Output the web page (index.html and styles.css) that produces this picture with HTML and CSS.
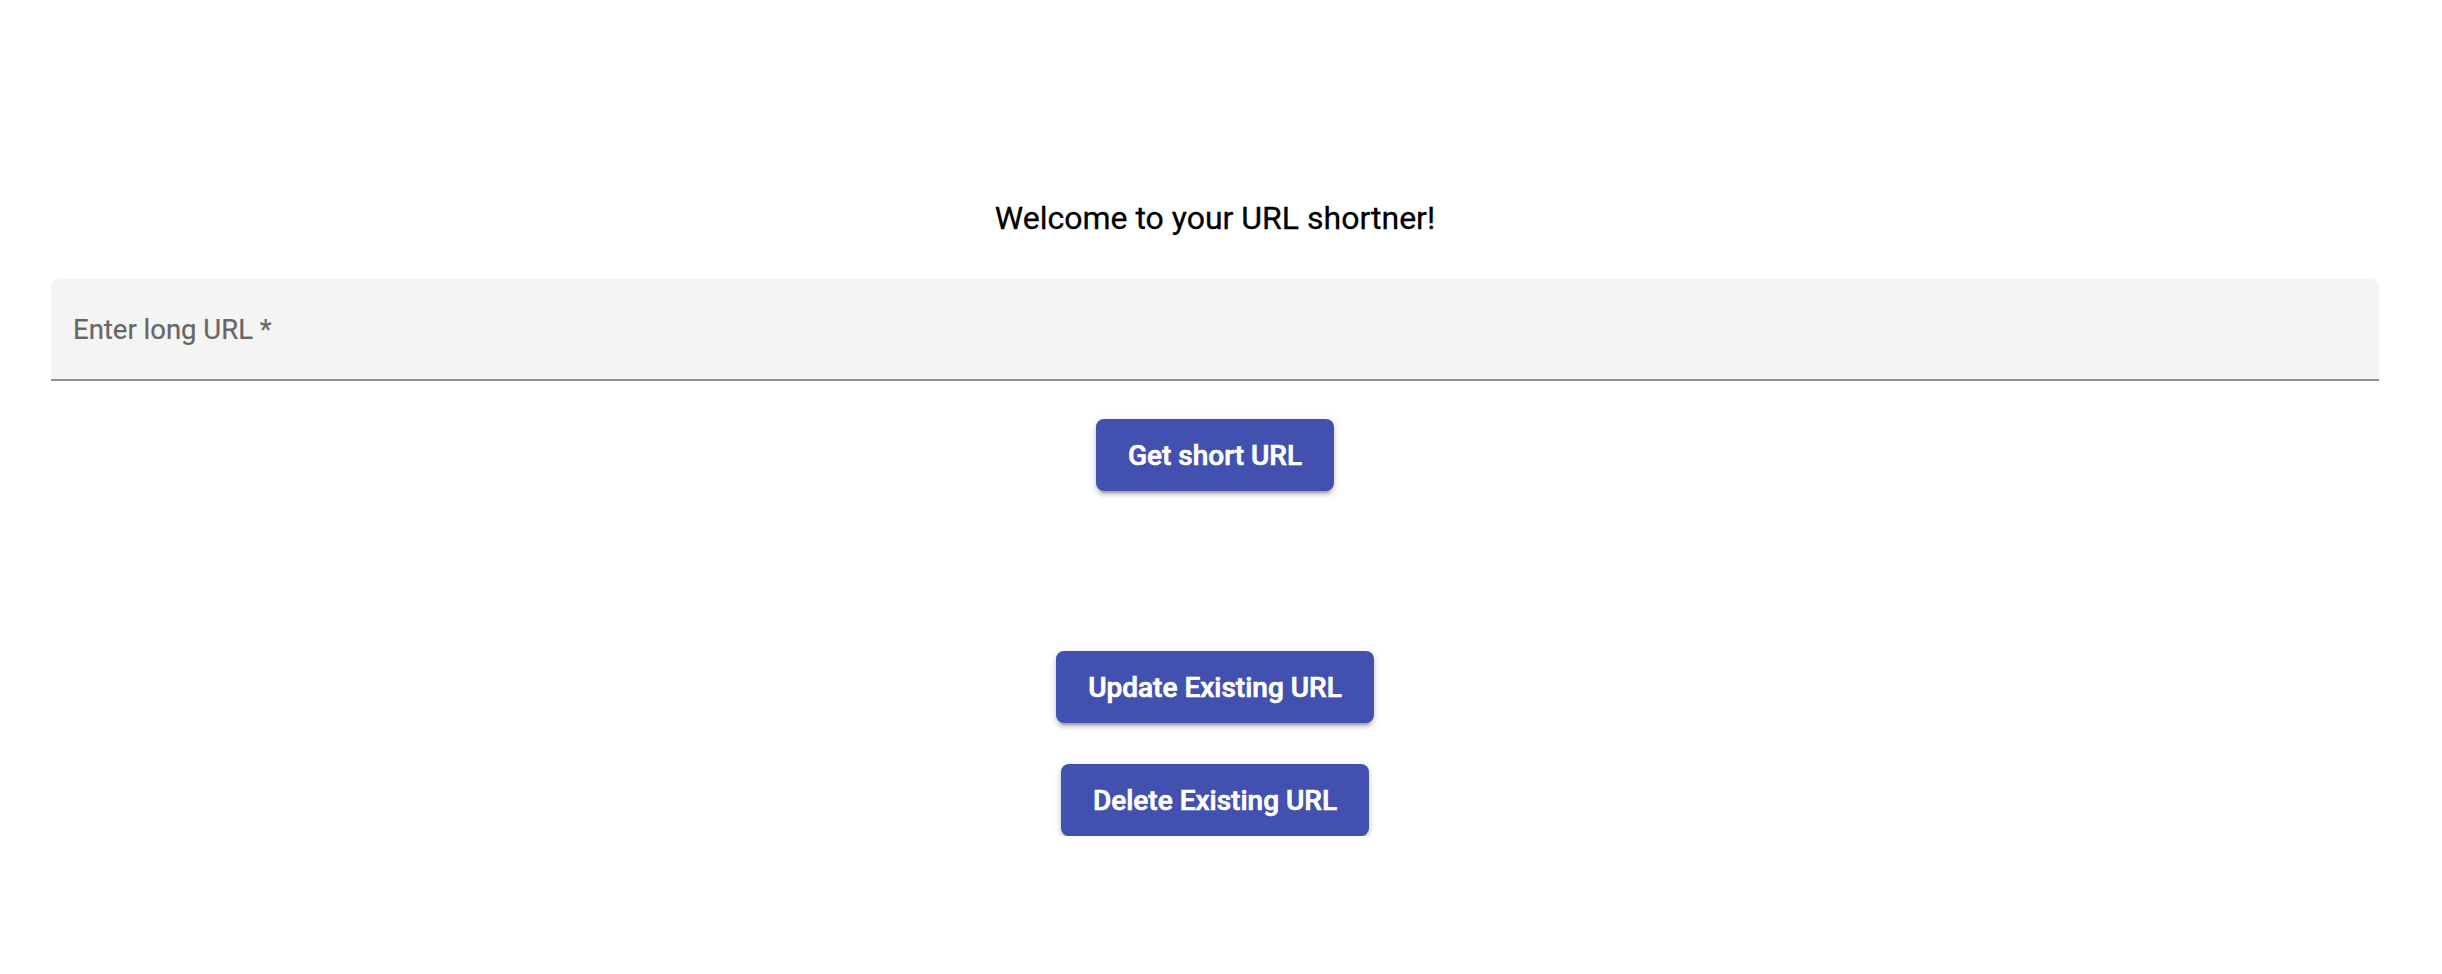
FILE: index.html
```html
<!DOCTYPE html>
<html lang="en">
<head>
<meta charset="utf-8">
<title>URL shortner</title>
<link rel="stylesheet" href="styles.css">
</head>
<body>
<main class="page">
  <h1 class="title">Welcome to your URL shortner!</h1>
  <div class="field">
    <label class="field-label">Enter long URL *</label>
  </div>
  <button class="btn btn-short">Get short URL</button>
  <div class="actions">
    <button class="btn">Update Existing URL</button>
    <button class="btn">Delete Existing URL</button>
  </div>
</main>
</body>
</html>
```
FILE: styles.css
```css
html, body {
  margin: 0;
  padding: 0;
  background: #ffffff;
}
body {
  font-family: Roboto, "Liberation Sans", sans-serif;
  width: 2430px;
}
.page {
  display: flex;
  flex-direction: column;
  align-items: center;
  padding: 194px 51px 0;
}
.title {
  margin: 0;
  font-size: 32px;
  font-weight: 400;
  line-height: 48px;
  color: #000;
  -webkit-text-stroke: 0.3px #000;
}
.field {
  align-self: stretch;
  margin-top: 37px;
  height: 100px;
  background: #f4f4f4;
  border-radius: 8px 8px 0 0;
  border-bottom: 2px solid #8f8f8f;
  display: flex;
  align-items: center;
  padding-left: 22px;
}
.field-label {
  font-size: 27.5px;
  line-height: 1;
  color: #666666;
  padding-top: 2px;
  -webkit-text-stroke: 0.2px #666666;
}
.btn {
  height: 72px;
  padding: 0 32px;
  border: none;
  border-radius: 8px;
  background: #4250b0;
  color: #fff;
  font-family: Roboto, "Liberation Sans", sans-serif;
  font-size: 28px;
  font-weight: 500;
  -webkit-text-stroke: 0.7px #fff;
  box-shadow: 0 6px 2px -4px rgba(0,0,0,.2), 0 4px 4px 0 rgba(0,0,0,.14), 0 2px 10px 0 rgba(0,0,0,.12);
  cursor: pointer;
}
.btn-short {
  margin-top: 38px;
}
.actions {
  margin-top: 160px;
  display: flex;
  flex-direction: column;
  align-items: center;
  gap: 41px;
}
```
